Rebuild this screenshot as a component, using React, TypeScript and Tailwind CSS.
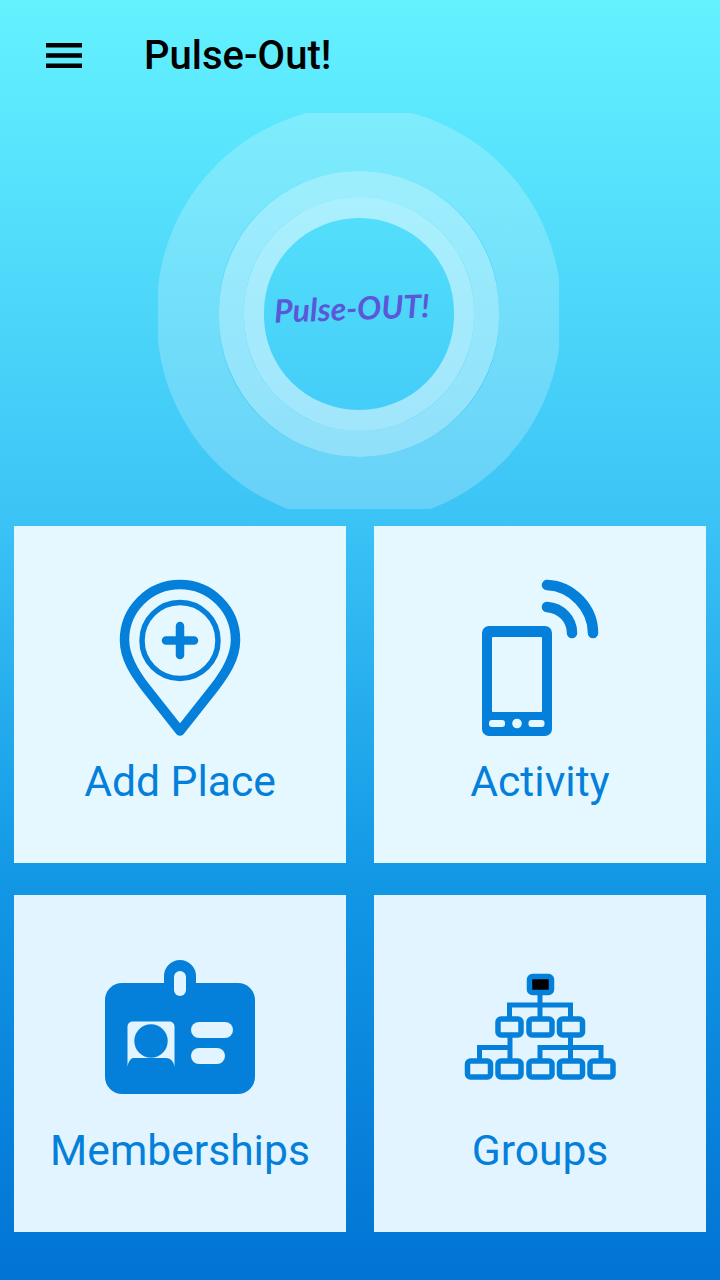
import React from 'react'

const BLUE = '#0480da'

const MenuIcon = () => (
  <svg width="36" height="25" viewBox="0 0 36 25" fill="none" stroke="#000" strokeWidth="4.500" className="-mt-[2px]">
    <path d="M0 2.250 H36 M0 12.500 H36 M0 22.750 H36" />
  </svg>
)

const PinIcon = () => (
  <svg width="160" height="175" viewBox="0 0 160 175" fill="none" stroke={BLUE} strokeLinecap="round" strokeLinejoin="round">
    <path d="M80 161 L46 118 C35 104 24.500 88 24.500 70 A55.500 55.500 0 0 1 135.500 70 C135.500 88 125 104 114 118 Z" strokeWidth="9.500" />
    <circle cx="80" cy="70.500" r="38" strokeWidth="5.500" />
    <path d="M66 70.500 H94 M80 56 V85" strokeWidth="8.500" />
  </svg>
)

const PhoneIcon = () => (
  <svg width="160" height="175" viewBox="0 0 160 175" fill="none">
    <rect x="22" y="56" width="70" height="110" rx="7" fill={BLUE} />
    <rect x="32" y="67" width="50" height="75" rx="1" fill="#e6f8ff" />
    <rect x="29" y="150" width="16" height="7" rx="3" fill="#e6f8ff" />
    <circle cx="57" cy="153.500" r="4.800" fill="#e6f8ff" />
    <rect x="68.500" y="150" width="16" height="7" rx="3" fill="#e6f8ff" />
    <path d="M87 15 C112 16 133 38 133 63" stroke={BLUE} strokeWidth="10.500" strokeLinecap="round" />
    <path d="M87 37 C101 38 112 49 112 63" stroke={BLUE} strokeWidth="10.500" strokeLinecap="round" />
  </svg>
)

const BadgeIcon = () => (
  <svg width="170" height="155" viewBox="0 0 170 155" fill="none">
    <path d="M69 40 V26 A16 16 0 0 1 101 26 V40 Z" fill={BLUE} />
    <rect x="10" y="33" width="150" height="111" rx="17" fill={BLUE} />
    <rect x="79" y="21" width="12" height="25" rx="6" fill="#e1f4ff" />
    <path d="M37.500 71.500 H74.500 A5 5 0 0 1 79.500 76.500 V117 C79 112 76 108 71 108 H38 C36 108 33 112 32.500 117 V76.500 A5 5 0 0 1 37.500 71.500 Z" fill="#e1f4ff" />
    <circle cx="56" cy="91" r="16.700" fill={BLUE} />
    <rect x="96" y="72" width="42" height="16" rx="8" fill="#e1f4ff" />
    <rect x="96" y="98" width="34" height="16" rx="8" fill="#e1f4ff" />
  </svg>
)

const OrgIcon = () => {
  const row2 = [43, 74, 104.500]
  const row3 = [12.500, 43, 74, 104.500, 135]
  return (
    <svg width="170" height="125" viewBox="0 0 170 125" fill="none" stroke={BLUE} strokeWidth="5.500">
      <path d="M85 28 V52 M54.500 52 V40 H115.500 V52 M55 72 V94 M24.500 94 V82.500 H55 M115.500 72 V94 M85 94 V82.500 H146 V94" strokeWidth="5" />
      <rect x="74.500" y="11.500" width="22" height="16" rx="3" fill="#000" strokeWidth="5.500" />
      {row2.map((x) => (
        <rect key={x} x={x} y="54" width="23" height="16" rx="3" />
      ))}
      {row3.map((x) => (
        <rect key={x} x={x} y="96" width="23" height="16" rx="3" />
      ))}
    </svg>
  )
}

const Card = ({ icon, label, top, bg }: { icon: React.ReactNode; label: string; top: string; bg: string }) => (
  <div className={`h-[337px] flex flex-col items-center ${bg}`}>
    <div className={`h-[230px] ${top}`}>{icon}</div>
    <span className="text-[42.6px] leading-[50px] text-[#0480da]">{label}</span>
  </div>
)

export default function App() {
  return (
    <div
      className="w-[720px] h-[1280px] overflow-hidden bg-[linear-gradient(to_bottom,#64f2ff_0%,#3cc4f6_40%,#1297e5_69%,#0274d4_100%)] text-black"
      style={{ fontFamily: 'Roboto, sans-serif' }}
    >
      <header className="h-[113px] flex items-center pl-[46px]">
        <MenuIcon />
        <h1 className="ml-[62px] -mt-[2px] text-[40px] leading-[44px] font-medium">Pulse-Out!</h1>
      </header>

      <div className="h-[396px] flex justify-center pr-[3px]">
        <div className="w-[401px] h-[396px] overflow-hidden flex items-center justify-center">
          <div className="w-[404px] h-[416px] shrink-0 mt-[5px] rounded-full border-x-[62px] border-y-[65px] border-white/[0.22] flex items-center justify-center">
            <div className="w-[280px] h-[286px] shrink-0 rounded-full border-x-[25px] border-y-[26px] border-white/[0.42] flex items-center justify-center">
              <div className="w-[230px] h-[234px] shrink-0 rounded-full border-x-[20px] border-y-[21px] border-white/[0.5] flex items-center justify-center">
                <span
                  className="-ml-[13px] -mt-[11px] -rotate-2 whitespace-nowrap text-[32px] leading-[40px] font-bold italic text-[#5b58d8]"
                  style={{ fontFamily: 'Lato, sans-serif' }}
                >
                  Pulse-OUT!
                </span>
              </div>
            </div>
          </div>
        </div>
      </div>

      <div className="mt-[17px] mx-[14px] grid grid-cols-2 gap-x-[28px] gap-y-[32px]">
        <Card icon={<PinIcon />} label="Add Place" top="pt-[44px]" bg="bg-[#e6f8ff]" />
        <Card icon={<PhoneIcon />} label="Activity" top="pt-[44px]" bg="bg-[#e6f8ff]" />
        <Card icon={<BadgeIcon />} label="Memberships" top="pt-[55px]" bg="bg-[#e1f4ff]" />
        <Card icon={<OrgIcon />} label="Groups" top="pt-[70px]" bg="bg-[#e1f4ff]" />
      </div>
    </div>
  )
}
